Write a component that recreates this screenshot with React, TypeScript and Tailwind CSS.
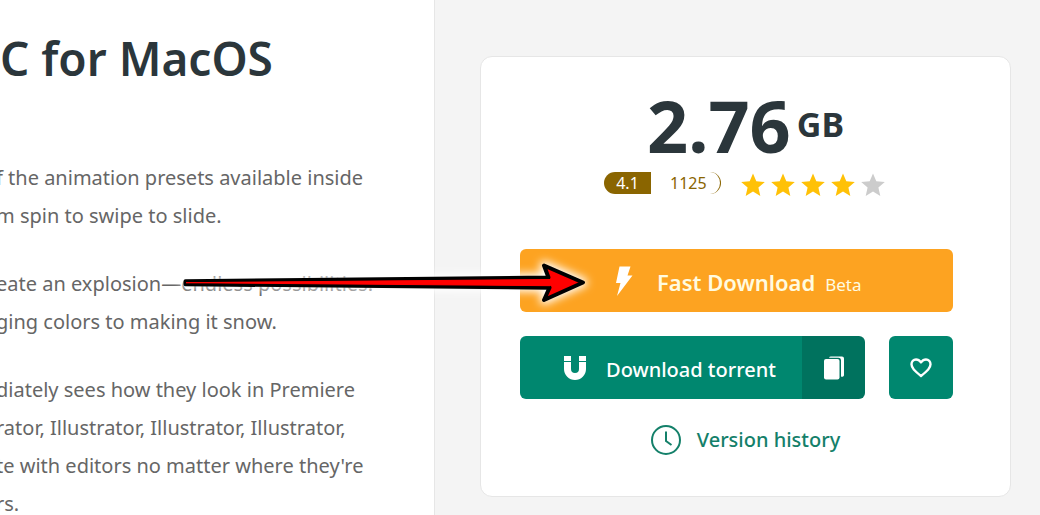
import type { ReactNode } from "react"

const paragraphs = [
    ["f the animation presets available inside", "m spin to swipe to slide."],
    ["eate an explosion—endless possibilities.", "ging colors to making it snow."],
    ["diately sees how they look in Premiere", "rator, Illustrator, Illustrator, Illustrator,", "te with editors no matter where they're", "rs."],
]

function Star({ filled }: { filled: boolean }) {
    return (
        <svg viewBox="0 0 24 24" className={filled ? "size-6 text-[#ffc107]" : "size-6 text-[#cccccc]"} fill="currentColor" aria-hidden="true">
            <path d="M12 .5l3.3 7.8 8.5.7-6.400 5.600 1.900 8.400L12 18.600l-7.300 4.400 1.900-8.400L.2 9l8.500-.7z" />
        </svg>
    )
}

function Article() {
    return (
        <article className="overflow-hidden border-r border-[#e6e6e6] bg-white whitespace-nowrap">
            <h1 className="pt-[26px] text-[46px] leading-[64px] font-semibold text-[#2b363b]">C for MacOS</h1>
            <div className="mt-[69px] -ml-1 space-y-[30px] text-xl leading-[38px] text-[#666666]">
                {paragraphs.map((lines) => (
                    <p key={lines[0]}>
                        {lines.map((line) => (
                            <span key={line} className="block">{line}</span>
                        ))}
                    </p>
                ))}
            </div>
        </article>
    )
}

function Rating() {
    return (
        <div className="mt-2 flex items-center justify-center pl-4">
            <div className="flex h-[22px] text-base leading-[22px]">
                <span className="w-[47px] rounded-l-full bg-[#8a6500] text-center text-white">4.1</span>
                <span className="w-[70px] rounded-r-full border-r border-[#8a6500] pl-[19px] text-[#8a6500]">1125</span>
            </div>
            <div className="ml-5 flex gap-[6px] pt-1" role="img" aria-label="4 of 5">
                {[1, 2, 3, 4, 5].map((n) => (
                    <Star key={n} filled={n < 5} />
                ))}
            </div>
        </div>
    )
}

function GreenButton({ className, label, children }: { className: string; label?: string; children: ReactNode }) {
    return (
        <button type="button" aria-label={label} className={`flex h-[63px] items-center justify-center text-white ${className}`}>
            {children}
        </button>
    )
}

function DownloadCard() {
    return (
        <section className="mt-14 mr-[29px] ml-[45px] h-fit rounded-xl border border-[#e6e6e6] bg-white pt-8 pr-[57px] pb-[39px] pl-[39px]">
            <div className="flex items-start justify-center gap-[6px] pl-[18px] font-bold text-[#2b363b]">
                <span className="text-[72px] leading-[72px]">2.76</span>
                <span className="text-[34px] leading-[70px]">GB</span>
            </div>

            <Rating />

            <button type="button" className="mt-[52px] flex h-[63px] w-full items-center rounded-md bg-[#fda321] pl-[95px] text-[#fffbe0]">
                <svg viewBox="0 0 18 30" className="h-[30px] w-[18px]" fill="#ffffff" aria-hidden="true">
                    <path d="M4.500 .5h11L12.500 9.500H17.500L2 30 5.500 17H1z" />
                </svg>
                <span className="ml-6 pt-1 text-[22px] font-semibold">Fast Download</span>
                <span className="ml-[10px] pt-2 text-[17px]">Beta</span>
            </button>

            <div className="mt-6 flex">
                <GreenButton className="grow rounded-l-md bg-[#00876f] pl-[18px]">
                    <svg viewBox="0 0 22 24" className="h-6 w-[22px]" fill="currentColor" aria-hidden="true">
                        <path d="M0 0h7v5H0zM15 0h7v5h-7zM0 6h7v7a4 4 0 0 0 8 0V6h7v7a11 11 0 0 1-22 0z" />
                    </svg>
                    <span className="ml-5 pt-1 text-xl font-medium">Download torrent</span>
                </GreenButton>
                <GreenButton label="Copy" className="w-[63px] rounded-r-md bg-[#00725e]">
                    <svg viewBox="0 0 20 24" className="h-6 w-5" fill="currentColor" aria-hidden="true">
                        <rect x="0" y="3" width="15.500" height="20.500" rx="2" />
                        <path d="M5 1.800A2 2 0 0 1 7 .5h11a2 2 0 0 1 2 2V18.500a2 2 0 0 1-3 2V4a2.500 2.500 0 0 0-2.500-2.200z" />
                    </svg>
                </GreenButton>
                <GreenButton label="Add to favorites" className="ml-6 w-16 rounded-md bg-[#00876f]">
                    <svg viewBox="0 0 22 20" className="h-5 w-[22px]" fill="none" stroke="currentColor" strokeWidth="2.400" strokeLinejoin="round" aria-hidden="true">
                        <path d="M11 18C4.500 12.500 1.500 10 1.500 6.300 1.500 3.500 3.500 1.500 6 1.500c2 0 3.600 1 5 2.900 1.400-1.900 3-2.900 5-2.900 2.500 0 4.500 2 4.500 4.800C20.500 10 17.500 12.500 11 18z" />
                    </svg>
                </GreenButton>
            </div>

            <a href="#history" className="mt-6 flex items-center justify-center gap-4 pl-[18px] text-xl leading-[34px] font-medium text-[#14806a]">
                <svg viewBox="0 0 30 30" className="size-[30px]" fill="none" stroke="currentColor" strokeWidth="2" aria-hidden="true">
                    <circle cx="15" cy="15" r="14" />
                    <path d="M15 6.500v9.500l5.500 4" />
                </svg>
                Version history
            </a>
        </section>
    )
}

function Arrow() {
    return (
        <svg viewBox="0 0 440 80" className="pointer-events-none absolute top-[240px] right-[430px] h-20 w-[440px]" aria-hidden="true">
            <defs>
                <filter id="glow" x="-10%" y="-60%" width="120%" height="220%">
                    <feGaussianBlur stdDeviation="4" />
                </filter>
            </defs>
            <path d="M15 42.500L378 37.500 374 25.500 413 42.500 374 60 379 47.500z" fill="#fff" stroke="#fff" strokeWidth="9" strokeLinejoin="round" filter="url(#glow)" />
            <path d="M15.500 41.200L378.500 37.500 374 25.500 413 42.500 374 60 379.500 47.700 15.500 44.200z" fill="#ff0000" stroke="#000" strokeWidth="4" strokeLinejoin="round" />
            <path d="M16 42.700L380 39.500V45.700z" fill="#ff0000" stroke="#ff0000" strokeWidth="1" strokeLinejoin="round" />
        </svg>
    )
}

export default function App() {
    return (
        <main className="relative grid h-screen grid-cols-[1fr_605px] overflow-hidden bg-[#f4f4f4] font-['Noto_Sans','Open_Sans',sans-serif]">
            <Article />
            <DownloadCard />
            <Arrow />
        </main>
    )
}
